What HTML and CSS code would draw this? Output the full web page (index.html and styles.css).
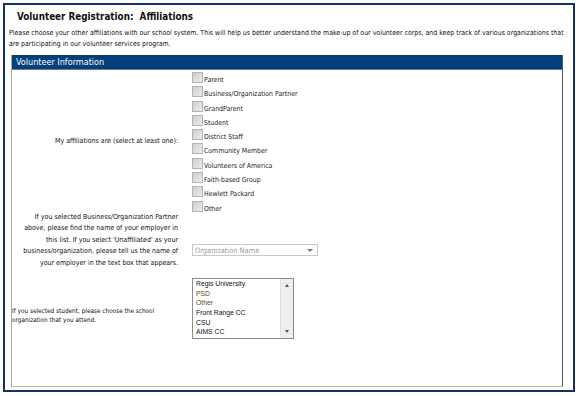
FILE: index.html
```html
<!DOCTYPE html>
<html lang="en">
<head>
    <meta charset="UTF-8">
    <title>Volunteer Registration: Affiliations</title>
    <link rel="stylesheet" href="styles.css">
</head>
<body>
    <div class="frame">
        <h1>Volunteer Registration:&nbsp; Affiliations</h1>
        <p class="intro">Please choose your other affiliations with our school system. This will help us better understand the make-up of our volunteer corps, and keep track of various organizations that are participating in our volunteer services program.</p>

        <div class="panel">
            <div class="panel-header">Volunteer Information</div>
            <div class="panel-body">

                <!-- Affiliations -->
                <div class="label">My affiliations are (select at least one):</div>
                <ul class="checks">
                    <li><input type="checkbox"><span>Parent</span></li>
                    <li><input type="checkbox"><span>Business/Organization Partner</span></li>
                    <li><input type="checkbox"><span>GrandParent</span></li>
                    <li><input type="checkbox"><span>Student</span></li>
                    <li><input type="checkbox"><span>District Staff</span></li>
                    <li><input type="checkbox"><span>Community Member</span></li>
                    <li><input type="checkbox"><span>Volunteers of America</span></li>
                    <li><input type="checkbox"><span>Faith-based Group</span></li>
                    <li><input type="checkbox"><span>Hewlett Packard</span></li>
                    <li><input type="checkbox"><span>Other</span></li>
                </ul>

                <!-- Employer -->
                <div class="label">If you selected Business/Organization Partner above, please find the name of your employer in this list. If you select 'Unaffiliated' as your business/organization, please tell us the name of your employer in the text box that appears.</div>
                <div class="field employer-field">
                    <div class="dropdown">
                        <span>Organization Name</span>
                        <span class="arrow"></span>
                    </div>
                </div>

                <!-- School -->
                <div class="label school-label">If you selected student, please choose the school organization that you attend.</div>
                <div class="field school-field">
                    <div class="listbox">
                        <ul class="options">
                            <li>Regis University</li>
                            <li class="dim">PSD</li>
                            <li class="dim">Other</li>
                            <li>Front Range CC</li>
                            <li>CSU</li>
                            <li>AIMS CC</li>
                        </ul>
                        <div class="scrollbar">
                            <span class="up"></span>
                            <span class="down"></span>
                        </div>
                    </div>
                </div>

            </div>
        </div>
    </div>
</body>
</html>
```

FILE: styles.css
```css
* {
    margin: 0;
    padding: 0;
    box-sizing: border-box;
}

body {
    font-family: 'DejaVu Sans Condensed', 'DejaVu Sans', sans-serif;
    background: #fff;
    color: #111;
}

.frame {
    margin: 3px 0 0 3px;
    width: 572px;
    height: 389px;
    border: 2px solid #14306a;
    display: flex;
    flex-direction: column;
}

h1 {
    font-size: 9.8px;
    line-height: 12px;
    font-weight: bold;
    margin: 6px 0 0 12px;
    color: #111;
}

.intro {
    font-size: 6.95px;
    line-height: 11px;
    margin: 5px 4px 0 4px;
}

.panel {
    margin: 5px 10px 3px 6px;
    flex: 1;
    border-left: 1px solid #a8a8a8;
    border-right: 1px solid #555;
    border-bottom: 1px solid #b8b8b8;
    display: flex;
    flex-direction: column;
}

.panel-header {
    background: #023f7c;
    color: #fff;
    font-size: 9px;
    height: 15px;
    line-height: 15px;
    padding-left: 4px;
    border-bottom: 1px solid #6b7a90;
}

.panel-body {
    display: grid;
    grid-template-columns: 166px 1fr;
    column-gap: 14px;
    padding-top: 1px;
}

.label {
    font-size: 7px;
    line-height: 11.5px;
    text-align: right;
    align-self: center;
}

.checks {
    list-style: none;
}

.checks li {
    display: flex;
    align-items: flex-start;
    height: 14.3px;
    padding-top: 1px;
    font-size: 6.9px;
    line-height: 8px;
}

.checks li:last-child {
    height: 12px;
}

.checks input {
    appearance: none;
    -webkit-appearance: none;
    width: 11px;
    height: 11px;
    border: 1px solid #b4b4b4;
    background: linear-gradient(135deg, #cfcfcf, #ececec);
    margin: 0;
    flex: none;
}

.checks span {
    margin: 4px 0 0 1px;
    color: #1a1a1a;
}

.employer-field {
    align-self: start;
    padding-top: 20px;
}

.field {
    align-self: center;
}

.dropdown {
    width: 126px;
    height: 12px;
    border: 1px solid #c8c8c8;
    display: flex;
    align-items: center;
    justify-content: space-between;
    padding: 0 4px 0 2px;
    font-size: 7.4px;
    color: #9a9a9a;
}

.arrow {
    width: 0;
    height: 0;
    border-left: 3px solid transparent;
    border-right: 3px solid transparent;
    border-top: 3px solid #777;
}

.school-label {
    text-align: left;
    font-size: 6.4px;
    line-height: 9.3px;
    padding-right: 10px;
}

.school-field {
    padding: 8.5px 0 24.5px;
}

.listbox {
    width: 102px;
    height: 61px;
    border: 1px solid #8c8c8c;
    display: flex;
}

.options {
    list-style: none;
    flex: 1;
    padding: 0.5px 0 0 3px;
    font-family: 'Liberation Sans', Arial, sans-serif;
    font-size: 6.8px;
    line-height: 9.6px;
    color: #111;
}

.options .dim {
    color: #5c4b26;
}

.scrollbar {
    width: 13px;
    background: #efefef;
    border-left: 1px solid #e2e2e2;
    display: flex;
    flex-direction: column;
    justify-content: space-between;
    align-items: center;
    padding: 5px 0 5px;
}

.up, .down {
    width: 0;
    height: 0;
    border-left: 2.5px solid transparent;
    border-right: 2.5px solid transparent;
}

.up {
    border-bottom: 3px solid #555;
}

.down {
    border-top: 3px solid #555;
}
```
